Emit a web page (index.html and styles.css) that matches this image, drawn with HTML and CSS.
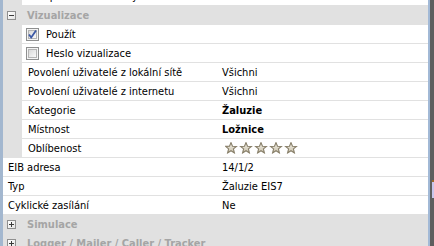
FILE: index.html
```html
<!DOCTYPE html>
<html lang="cs">
<head>
<meta charset="UTF-8" />
<title>Vlastnosti</title>
<link rel="stylesheet" href="styles.css">
</head>
<body>
  <div class="frame">
    <div class="edge-left"></div>

    <div class="grid">
      <div class="row sub">
        <div class="indent"></div>
        <div class="name">Komprimace statistiky</div>
        <div class="value">Nastavení minimalizace</div>
      </div>

      <div class="group">
        <span class="toggle minus"></span>
        <span class="group-title">Vizualizace</span>
      </div>

      <div class="row sub">
        <div class="indent"></div>
        <div class="name check">
          <svg class="box" width="13" height="13" viewBox="0 0 13 13">
            <defs>
              <linearGradient id="cb" x1="0" y1="0" x2="1" y2="1">
                <stop offset="0" stop-color="#d6d6d6"/>
                <stop offset="1" stop-color="#fbfbfb"/>
              </linearGradient>
            </defs>
            <rect x="0.5" y="0.5" width="12" height="12" fill="#f4f4f4" stroke="#8e8f8f"/>
            <rect x="2.5" y="2.5" width="8" height="8" fill="url(#cb)" stroke="#b4b4b4"/>
            <path d="M3 6.5 L5.2 9.5 L10 2.6" fill="none" stroke="#3b58a5" stroke-width="1.8"/>
          </svg>
          Použít
        </div>
        <div class="value"></div>
      </div>

      <div class="row sub">
        <div class="indent"></div>
        <div class="name check">
          <svg class="box" width="13" height="13" viewBox="0 0 13 13">
            <rect x="0.5" y="0.5" width="12" height="12" fill="#f4f4f4" stroke="#8e8f8f"/>
            <rect x="2.5" y="2.5" width="8" height="8" fill="url(#cb)" stroke="#b4b4b4"/>
          </svg>
          Heslo vizualizace
        </div>
        <div class="value"></div>
      </div>

      <div class="row sub">
        <div class="indent"></div>
        <div class="name">Povolení uživatelé z lokální sítě</div>
        <div class="value">Všichni</div>
      </div>

      <div class="row sub">
        <div class="indent"></div>
        <div class="name">Povolení uživatelé z internetu</div>
        <div class="value">Všichni</div>
      </div>

      <div class="row sub">
        <div class="indent"></div>
        <div class="name">Kategorie</div>
        <div class="value bold">Žaluzie</div>
      </div>

      <div class="row sub">
        <div class="indent"></div>
        <div class="name">Místnost</div>
        <div class="value bold">Ložnice</div>
      </div>

      <div class="row sub">
        <div class="indent"></div>
        <div class="name">Oblíbenost</div>
        <div class="value stars">
          <svg width="76" height="12" viewBox="0 0 76 12">
            <defs>
              <linearGradient id="st" x1="0" y1="0" x2="0" y2="1">
                <stop offset="0" stop-color="#f4f1e8"/>
                <stop offset="1" stop-color="#c9c1ab"/>
              </linearGradient>
              <path id="star" d="M6 0.6 L7.5 4.3 L11.4 4.4 L8.4 6.9 L9.4 10.9 L6 8.7 L2.6 10.9 L3.6 6.9 L0.6 4.4 L4.5 4.3 Z" fill="url(#st)" stroke="#867d67" stroke-width="1.1"/>
            </defs>
            <use href="#star" x="0"/>
            <use href="#star" x="15"/>
            <use href="#star" x="30"/>
            <use href="#star" x="45"/>
            <use href="#star" x="60"/>
          </svg>
        </div>
      </div>

      <div class="row top">
        <div class="name">EIB adresa</div>
        <div class="value">14/1/2</div>
      </div>

      <div class="row top">
        <div class="name">Typ</div>
        <div class="value">Žaluzie EIS7</div>
      </div>

      <div class="row top">
        <div class="name">Cyklické zasílání</div>
        <div class="value">Ne</div>
      </div>

      <div class="group">
        <span class="toggle plus"></span>
        <span class="group-title">Simulace</span>
      </div>

      <div class="group">
        <span class="toggle plus"></span>
        <span class="group-title">Logger / Mailer / Caller / Tracker</span>
      </div>
    </div>

    <div class="edge-right"></div>
    <div class="splitter">
      <div class="peek"></div>
    </div>
  </div>
</body>
</html>
```

FILE: styles.css
```css
html, body {
  margin: 0;
  height: 246px;
  overflow: hidden;
  background: #fff;
}
body {
  font-family: "DejaVu Sans Condensed", "DejaVu Sans", sans-serif;
  font-size: 11px;
  color: #000;
}
.frame {
  display: flex;
  height: 246px;
}
.edge-left {
  width: 3px;
  background: #a3b7cf;
}
.edge-right {
  width: 2px;
  background: #a2b9d6;
}
.splitter {
  width: 4px;
  background: #5e5e5e;
  display: flex;
  flex-direction: column;
  align-items: flex-end;
  padding-top: 180px;
}
.peek {
  width: 2px;
  height: 16px;
  background: #c9c6ec;
  border-top: 2px solid #9a6a2c;
}
.grid {
  flex: 1;
  margin-top: -13px;
  display: flex;
  flex-direction: column;
}
.row {
  display: flex;
  height: 19px;
}
.indent {
  width: 19px;
  background: #e1e1e1;
}
.name, .value {
  display: flex;
  align-items: center;
  height: 18px;
  border-bottom: 1px solid #e1e1e1;
  white-space: nowrap;
  overflow: hidden;
}
.row.sub .name {
  width: 189px;
  padding-left: 6px;
}
.row.top .name {
  width: 209px;
  padding-left: 5px;
}
.name {
  padding-right: 1px;
  flex: none;
}
.value {
  flex: 1;
  padding-left: 4px;
}
.bold {
  font-weight: 700;
}
.row.sub .name.check {
  width: 191px;
  padding-left: 4px;
  gap: 7px;
}
.stars {
  padding-left: 7px;
}
.stars svg {
  display: block;
}
.group {
  display: flex;
  align-items: center;
  height: 19px;
  background: #e1e1e1;
  flex: none;
}
.toggle {
  position: relative;
  width: 7px;
  height: 7px;
  margin-left: 4px;
  border: 1px solid #8f8f8f;
  background: linear-gradient(135deg, #ffffff, #e4e4e4);
  flex: none;
}
.toggle::before {
  content: "";
  position: absolute;
  left: 1px;
  top: 3px;
  width: 5px;
  height: 1px;
  background: #3a3a3a;
}
.toggle.plus::after {
  content: "";
  position: absolute;
  left: 3px;
  top: 1px;
  width: 1px;
  height: 5px;
  background: #3a3a3a;
}
.group-title {
  margin-left: 11px;
  font-weight: 700;
  color: #a5a5a5;
}
```
